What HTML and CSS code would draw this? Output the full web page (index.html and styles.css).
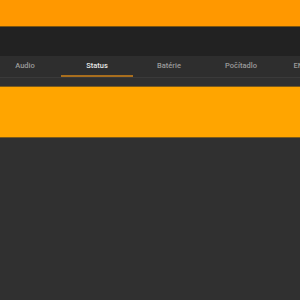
FILE: index.html
```html
<!DOCTYPE html>
<html>
<head>
<meta charset="utf-8">
<link rel="stylesheet" href="styles.css">
</head>
<body>
<header class="appbar"></header>
<div class="toolbar"></div>
<nav class="tabs">
  <div class="tab-scroller">
    <div class="tab">Audio</div>
    <div class="tab active">Status</div>
    <div class="tab">Batérie</div>
    <div class="tab">Počítadlo</div>
    <div class="tab">ENV senzor</div>
  </div>
</nav>
<div class="gap"></div>
<section class="banner"></section>
</body>
</html>
```
FILE: styles.css
```css
html, body {
  margin: 0;
  padding: 0;
  background: #303030;
  font-family: Roboto, "Liberation Sans", sans-serif;
  height: 100%;
  overflow: hidden;
}
.appbar {
  height: 26px;
  background: #ff9800;
  border-bottom: 1px solid #7a5410;
}
.toolbar {
  height: 29px;
  background: #222222;
}
.tabs {
  height: 21px;
  background: #2e2e2e;
  border-bottom: 1px solid #3a3a3a;
  overflow: hidden;
}
.tab-scroller {
  display: flex;
  margin-left: -11px;
  height: 100%;
}
.tab {
  flex: 0 0 auto;
  min-width: 72px;
  box-sizing: border-box;
  display: flex;
  align-items: center;
  justify-content: center;
  font-size: 7.5px;
  font-weight: 500;
  color: #9a9a9a;
  white-space: nowrap;
  border-bottom: 2px solid transparent;
}
.tab.active {
  color: #e6e6e6;
  border-bottom-color: #a86e1e;
}
.gap {
  height: 8px;
}
.banner {
  height: 50px;
  background: #ffa500;
  border-top: 1px solid #7a5a1c;
  border-bottom: 1px solid #7a5a1c;
}
```
